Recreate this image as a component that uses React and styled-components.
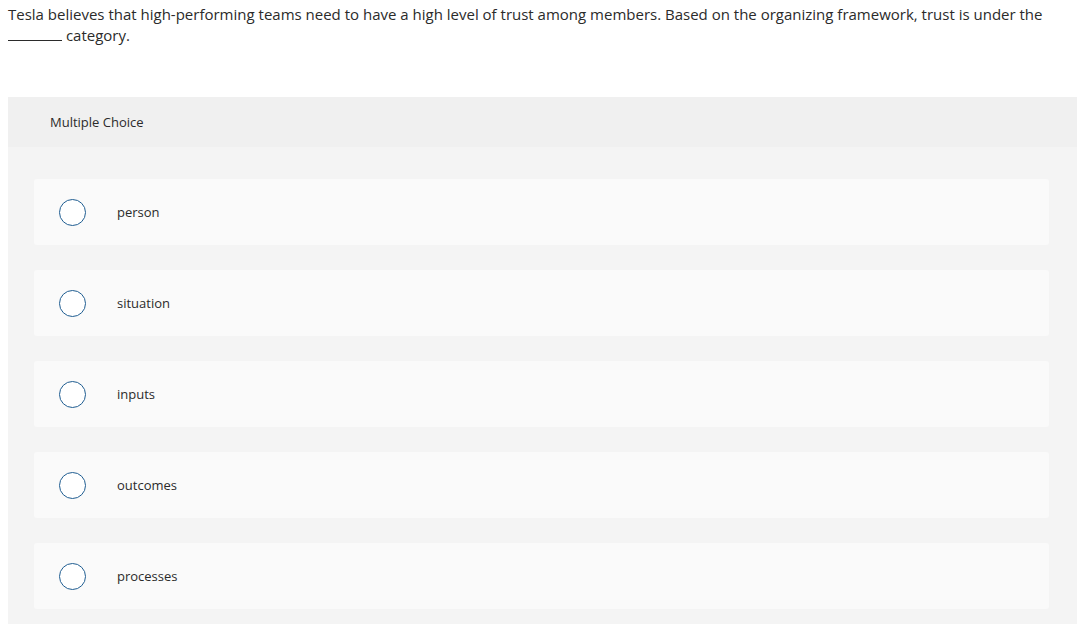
import React from "react";
import styled, { createGlobalStyle } from "styled-components";

const GlobalStyle = createGlobalStyle`
  body {
    margin: 0;
    background: #ffffff;
    font-family: "Open Sans", "Liberation Sans", sans-serif;
    color: #2b2b2b;
  }
`;

const options = ["person", "situation", "inputs", "outcomes", "processes"];

export default function App() {
  return (
    <Page>
      <GlobalStyle />
      <Question>
        Tesla believes that high-performing teams need to have a high level of
        trust among members. Based on the organizing framework, trust is under
        the <Blank /> category.
      </Question>
      <Panel>
        <PanelHeader>Multiple Choice</PanelHeader>
        <OptionList>
          {options.map((option) => (
            <Option key={option}>
              <Radio />
              <OptionLabel>{option}</OptionLabel>
            </Option>
          ))}
        </OptionList>
      </Panel>
    </Page>
  );
}

const Page = styled.div`
  padding: 4px 6px 0 8px;
`;

const Question = styled.p`
  margin: 0;
  font-size: 15px;
  line-height: 21px;
  color: #2b2b2b;
`;

const Blank = styled.span`
  display: inline-block;
  width: 54px;
  border-bottom: 1px solid #2b2b2b;
  vertical-align: baseline;
`;

const Panel = styled.div`
  margin-top: 51px;
  width: 1069px;
  background: #f4f4f4;
  border-radius: 2px;
`;

const PanelHeader = styled.div`
  height: 50px;
  display: flex;
  align-items: center;
  padding-left: 42px;
  background: #f0f0f0;
  font-size: 13px;
  color: #2b2b2b;
`;

const OptionList = styled.div`
  display: flex;
  flex-direction: column;
  gap: 25px;
  padding: 32px 28px 25px 26px;
`;

const Option = styled.div`
  height: 66px;
  display: flex;
  align-items: center;
  padding-left: 25px;
  background: #fafafa;
  border-radius: 3px;
`;

const Radio = styled.span`
  width: 27px;
  height: 27px;
  box-sizing: border-box;
  border: 1.5px solid #1f5d91;
  border-radius: 50%;
  background: #ffffff;
  flex-shrink: 0;
`;

const OptionLabel = styled.span`
  margin-left: 31px;
  font-size: 13px;
  color: #2b2b2b;
`;
